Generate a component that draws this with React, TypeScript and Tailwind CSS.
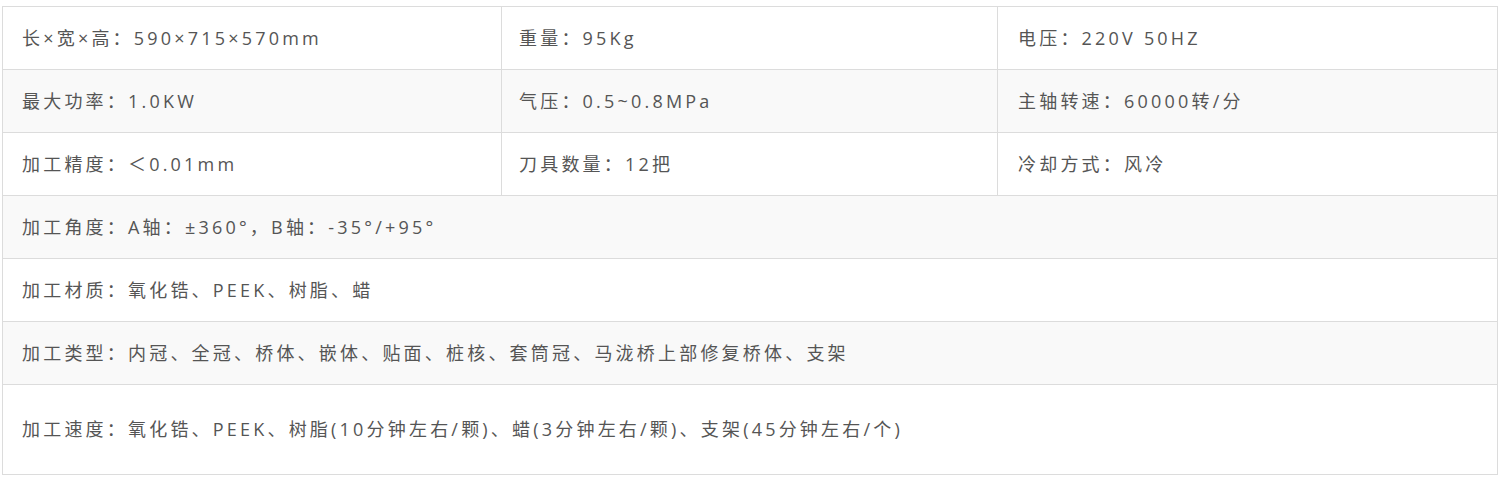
const threeCols: string[][] = [
  ["长×宽×高：590×715×570mm", "重量：95Kg", "电压：220V 50HZ"],
  ["最大功率：1.0KW", "气压：0.5~0.8MPa", "主轴转速：60000转/分"],
  ["加工精度：＜0.01mm", "刀具数量：12把", "冷却方式：风冷"],
];

const fullRows: string[] = [
  "加工角度：A轴：±360°，B轴：-35°/+95°",
  "加工材质：氧化锆、PEEK、树脂、蜡",
  "加工类型：内冠、全冠、桥体、嵌体、贴面、桩核、套筒冠、马泷桥上部修复桥体、支架",
];

const font = { fontFamily: '"Open Sans", "Noto Sans CJK SC", sans-serif' };

export default function App() {
  return (
    <div className="w-[1500px] h-[482px] bg-white px-[2px] pt-[6px]" style={font}>
      <div className="border-l border-t border-[#dcdcdc] text-[18px] tracking-[3.2px] text-[#555555]">
        {threeCols.map((row, i) => (
          <div
            key={i}
            className={`flex h-[63px] ${i % 2 === 1 ? "bg-[#f9f9f9]" : "bg-white"}`}
          >
            <div className="w-[499px] flex items-center pl-[19px] border-r border-b border-[#dcdcdc]">
              {row[0]}
            </div>
            <div className="w-[496px] flex items-center pl-[17px] border-r border-b border-[#dcdcdc]">
              {row[1]}
            </div>
            <div className="flex-1 flex items-center pl-[20px] border-r border-b border-[#dcdcdc]">
              {row[2]}
            </div>
          </div>
        ))}
        {fullRows.map((text, i) => (
          <div
            key={text}
            className={`flex items-center h-[63px] pl-[19px] border-r border-b border-[#dcdcdc] ${
              i % 2 === 0 ? "bg-[#f9f9f9]" : "bg-white"
            }`}
          >
            {text}
          </div>
        ))}
        <div className="flex items-center h-[90px] pl-[19px] border-r border-b border-[#dcdcdc] bg-white">
          加工速度：氧化锆、PEEK、树脂(10分钟左右/颗)、蜡(3分钟左右/颗)、支架(45分钟左右/个)
        </div>
      </div>
    </div>
  );
}
